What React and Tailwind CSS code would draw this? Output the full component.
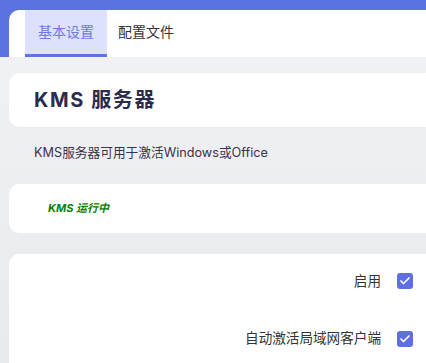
import { Check } from "lucide-react";

function CheckRow({ label }) {
  return (
    <div className="flex items-center justify-end gap-4 pr-[13px]">
      <span className="text-[13.6px] text-[#333]">{label}</span>
      <span className="w-4 h-4 rounded-[3px] bg-[#5f6fe0] flex items-center justify-center">
        <Check className="w-3 h-3 text-white" strokeWidth={3.5} />
      </span>
    </div>
  );
}

export default function App() {
  return (
    <div
      className="w-[426px] h-[363px] overflow-hidden bg-gradient-to-b from-[#f2f3f5] to-[#e9eaee]"
      style={{ fontFamily: '"Inter", "Noto Sans CJK SC", sans-serif' }}
    >
      {/* 顶部 + 标签 */}
      <div className="bg-[#5c72e0] pt-[10px] pl-[9px]">
        <div className="bg-white rounded-tl-[10px] h-[47px] flex pl-4">
          <div className="w-[82px] bg-[#dde1fc] border-b-[3px] border-[#5f73e3] flex items-center justify-center pb-[1px] text-[14px] text-[#6d79de]">
            基本设置
          </div>
          <div className="px-[11px] pb-[4px] flex items-center text-[14px] text-[#333]">
            配置文件
          </div>
        </div>
      </div>

      <div className="pl-[9px] pt-4 flex flex-col">
        {/* 标题 */}
        <div className="bg-white rounded-l-[10px] h-[54px] flex items-center pl-[25px] shadow-[0_1px_3px_rgba(0,0,0,0.03)]">
          <h1 className="text-[20px] font-bold tracking-[1.6px] text-[#2b2c4c]">KMS 服务器</h1>
        </div>

        <p className="pl-[25px] mt-[17px] text-[12.7px] text-[#3d3049] leading-[18px]">
          KMS服务器可用于激活Windows或Office
        </p>

        {/* 状态 */}
        <div className="mt-[22px] bg-white rounded-l-[10px] h-[49px] flex items-center pl-[39px]">
          <span className="text-[11px] font-bold italic text-[#0a8000]">KMS 运行中</span>
        </div>

        {/* 设置项 */}
        <div className="mt-[21px] bg-white rounded-tl-[10px] h-[120px] pt-[17px] flex flex-col gap-[37px]">
          <CheckRow label="启用" />
          <CheckRow label="自动激活局域网客户端" />
        </div>
      </div>
    </div>
  );
}
